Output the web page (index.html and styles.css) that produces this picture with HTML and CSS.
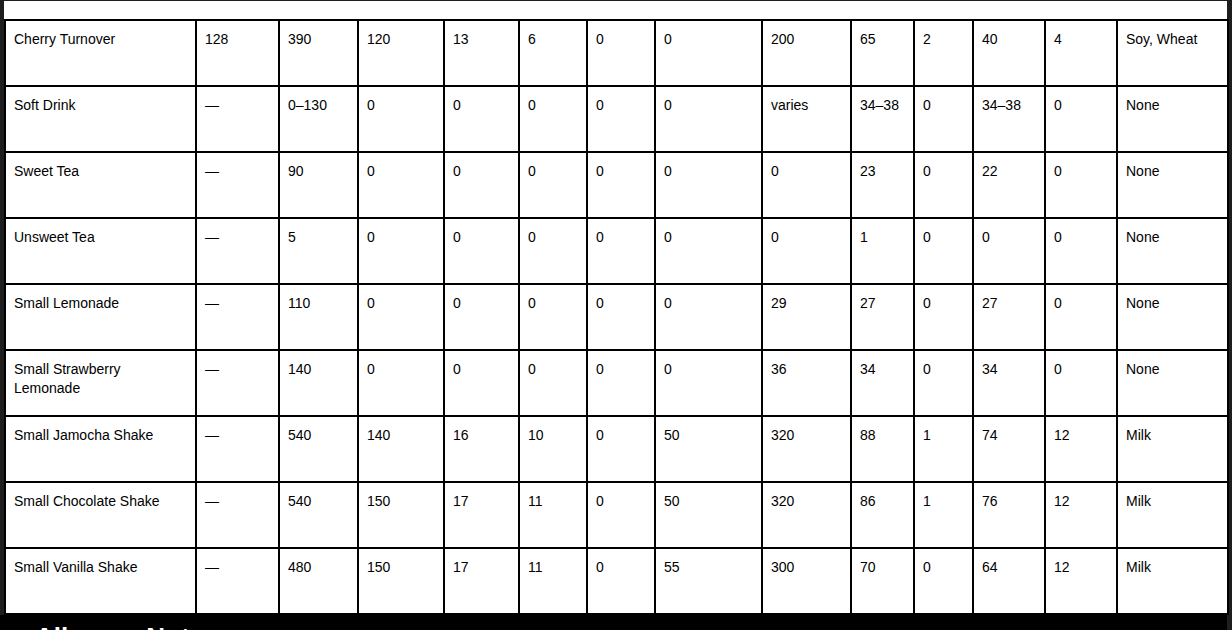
FILE: index.html
```html
<!DOCTYPE html>
<html lang="en">
<head>
<meta charset="utf-8">
<title>Nutrition Table</title>
<link rel="stylesheet" href="styles.css">
</head>
<body>
<div class="page">
  <div class="sheet">
    <table class="nutri">
      <colgroup>
        <col class="c1"><col class="c2"><col class="c3"><col class="c4"><col class="c5"><col class="c6"><col class="c7">
        <col class="c8"><col class="c9"><col class="c10"><col class="c11"><col class="c12"><col class="c13"><col class="c14">
      </colgroup>
      <tbody>
        <tr><td>Cherry Turnover</td><td>128</td><td>390</td><td>120</td><td>13</td><td>6</td><td>0</td><td>0</td><td>200</td><td>65</td><td>2</td><td>40</td><td>4</td><td>Soy, Wheat</td></tr>
        <tr><td>Soft Drink</td><td>—</td><td>0–130</td><td>0</td><td>0</td><td>0</td><td>0</td><td>0</td><td>varies</td><td>34–38</td><td>0</td><td>34–38</td><td>0</td><td>None</td></tr>
        <tr><td>Sweet Tea</td><td>—</td><td>90</td><td>0</td><td>0</td><td>0</td><td>0</td><td>0</td><td>0</td><td>23</td><td>0</td><td>22</td><td>0</td><td>None</td></tr>
        <tr><td>Unsweet Tea</td><td>—</td><td>5</td><td>0</td><td>0</td><td>0</td><td>0</td><td>0</td><td>0</td><td>1</td><td>0</td><td>0</td><td>0</td><td>None</td></tr>
        <tr><td>Small Lemonade</td><td>—</td><td>110</td><td>0</td><td>0</td><td>0</td><td>0</td><td>0</td><td>29</td><td>27</td><td>0</td><td>27</td><td>0</td><td>None</td></tr>
        <tr><td>Small Strawberry Lemonade</td><td>—</td><td>140</td><td>0</td><td>0</td><td>0</td><td>0</td><td>0</td><td>36</td><td>34</td><td>0</td><td>34</td><td>0</td><td>None</td></tr>
        <tr><td>Small Jamocha Shake</td><td>—</td><td>540</td><td>140</td><td>16</td><td>10</td><td>0</td><td>50</td><td>320</td><td>88</td><td>1</td><td>74</td><td>12</td><td>Milk</td></tr>
        <tr><td>Small Chocolate Shake</td><td>—</td><td>540</td><td>150</td><td>17</td><td>11</td><td>0</td><td>50</td><td>320</td><td>86</td><td>1</td><td>76</td><td>12</td><td>Milk</td></tr>
        <tr><td>Small Vanilla Shake</td><td>—</td><td>480</td><td>150</td><td>17</td><td>11</td><td>0</td><td>55</td><td>300</td><td>70</td><td>0</td><td>64</td><td>12</td><td>Milk</td></tr>
      </tbody>
    </table>
  </div>
  <div class="after">
    <h2 class="after-title">Allergen Notes</h2>
  </div>
</div>
</body>
</html>
```

FILE: styles.css
```css
html, body {
  margin: 0;
  padding: 0;
  height: 100%;
}
body {
  background: #1e1e1e;
  font-family: "Liberation Sans", Arial, sans-serif;
  overflow: hidden;
}
.page {
  margin-right: 5px;
  padding-top: 1px;
  min-height: 100%;
  display: flex;
  flex-direction: column;
}
.sheet {
  background: #fff;
  margin-left: 4px;
  padding-top: 18px;
}
.nutri {
  width: 1223px;
  border-collapse: collapse;
  table-layout: fixed;
  color: #000;
  font-size: 14px;
  line-height: 19px;
}
.nutri td {
  border: 2px solid #000;
  padding: 9px 8px 7px;
  height: 48px;
  vertical-align: top;
  box-sizing: content-box;
}
.c1 { width: 191px; }
.c2 { width: 83px; }
.c3 { width: 79px; }
.c4 { width: 86px; }
.c5 { width: 75px; }
.c6 { width: 68px; }
.c7 { width: 68px; }
.c8 { width: 107px; }
.c9 { width: 89px; }
.c10 { width: 63px; }
.c11 { width: 59px; }
.c12 { width: 72px; }
.c13 { width: 72px; }
.c14 { width: 111px; }
.after {
  flex: 1;
  background: #000;
  padding: 7px 0 0 35px;
}
.after-title {
  margin: 0;
  color: #fff;
  font-size: 26px;
  font-weight: bold;
  line-height: 30px;
}
```
